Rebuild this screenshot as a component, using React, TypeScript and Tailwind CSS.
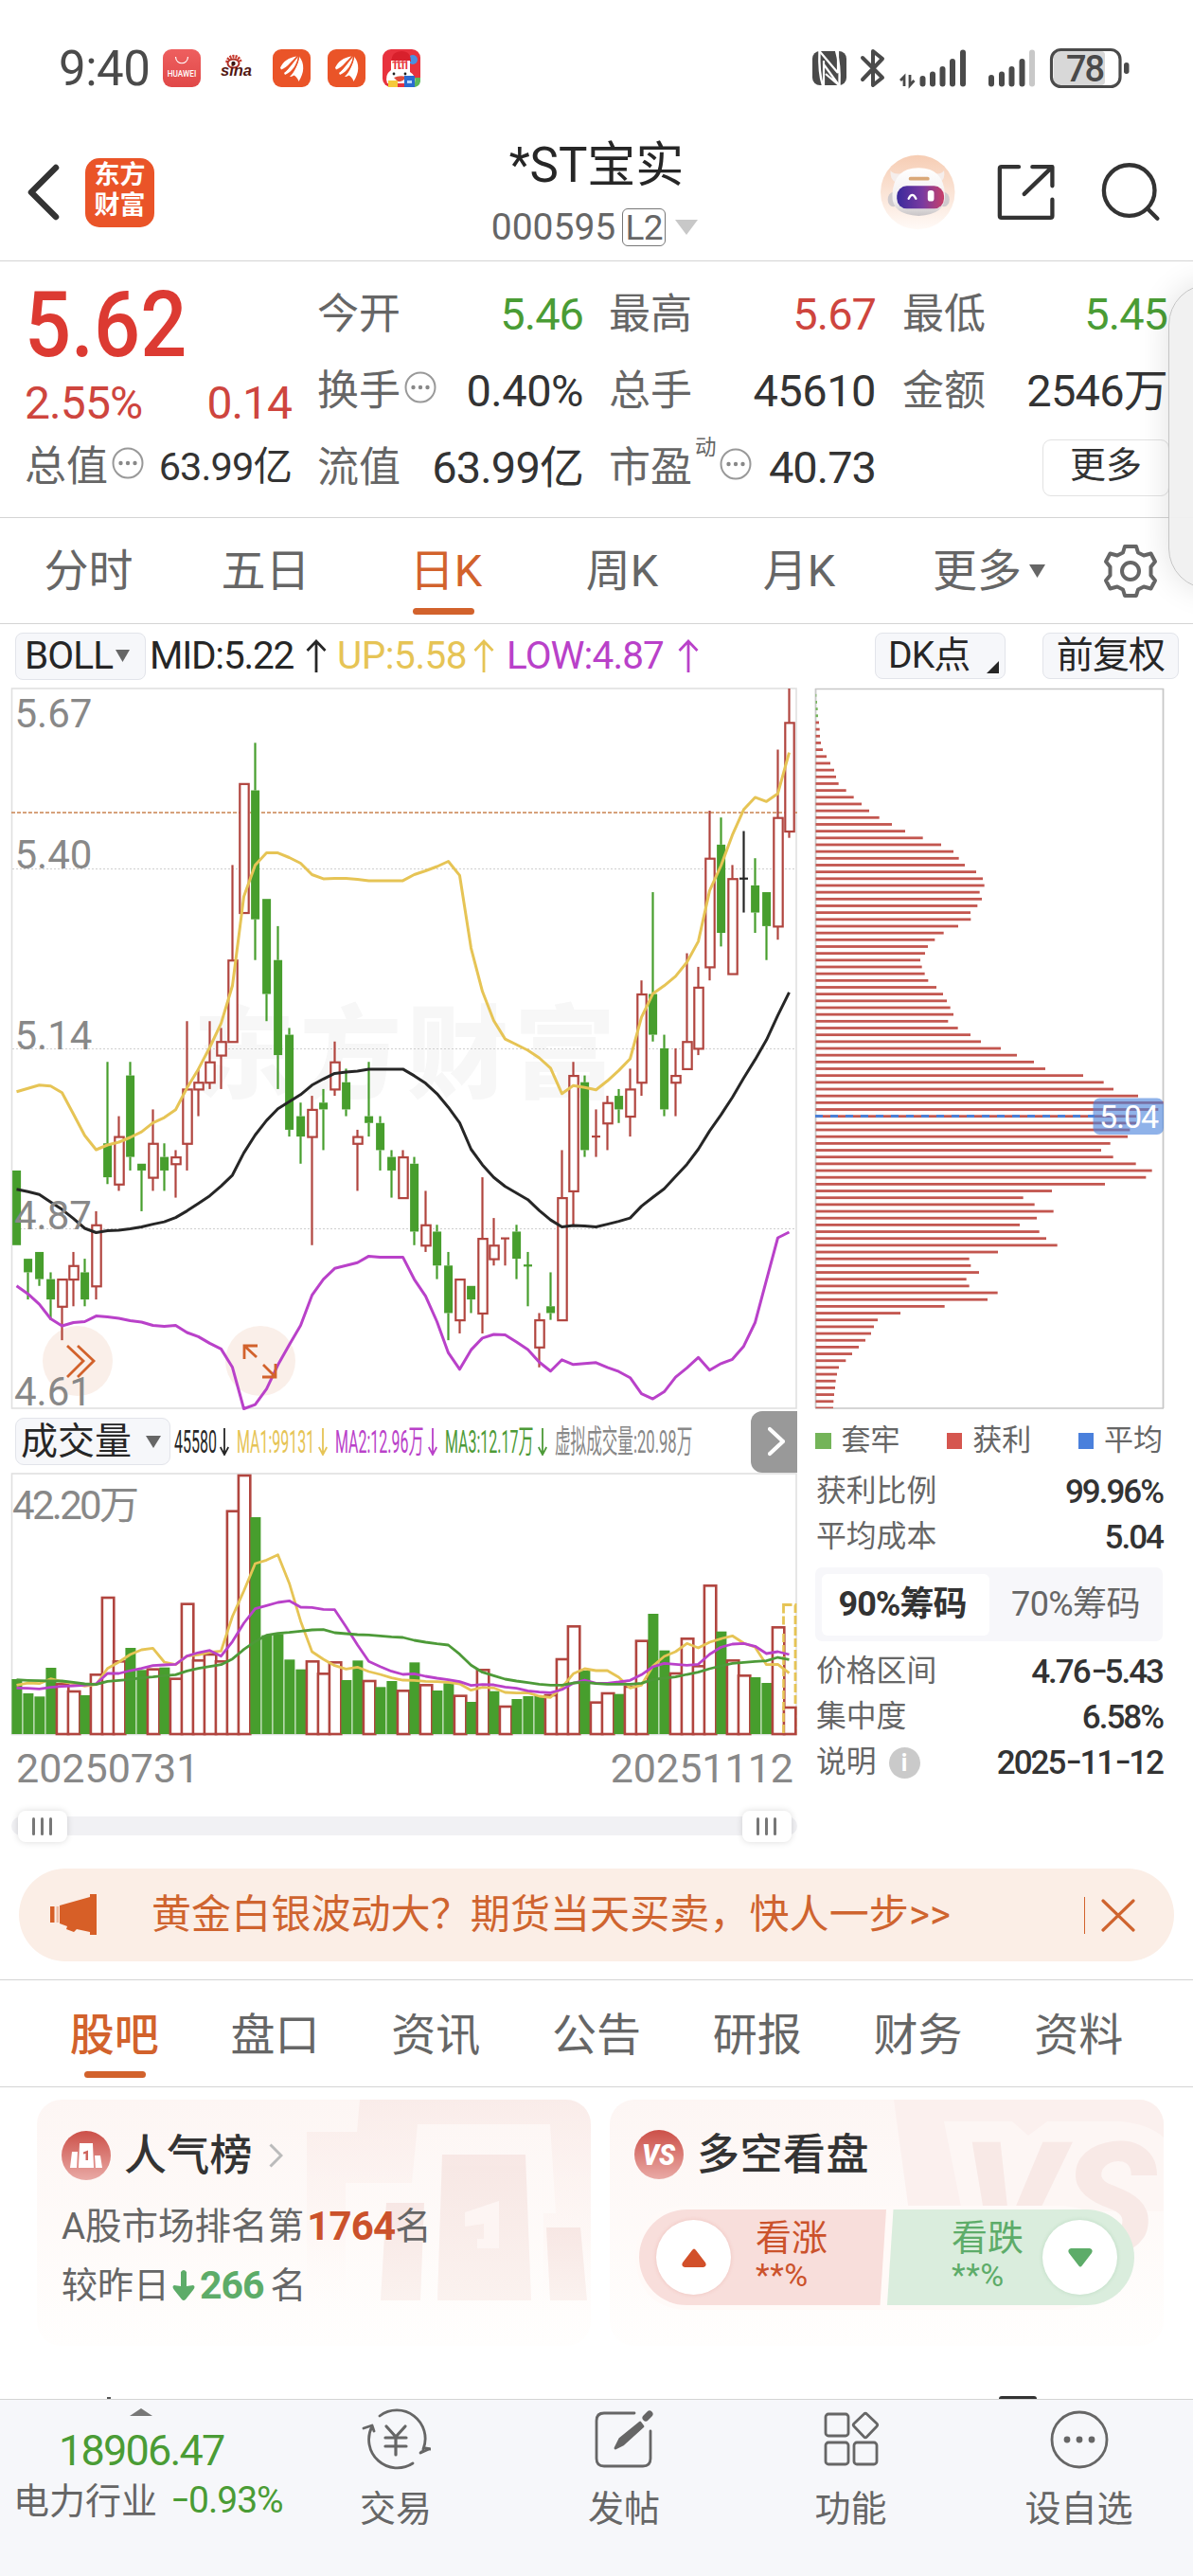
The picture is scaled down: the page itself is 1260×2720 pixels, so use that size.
import React from "react";

type Tone = "r" | "g" | "k";

/* Candles: tone, high, body top, body bottom, low — in cents below 5.67 */
const CANDLES: [Tone, number, number, number, number][] = [
  ["g", 71, 71, 82, 82], ["g", 84, 84, 86, 90], ["g", 83, 83, 87, 88], ["g", 86, 87, 90, 93],
  ["r", 87, 87, 91, 96], ["r", 83, 85, 87, 91], ["g", 84, 86, 90, 91], ["r", 77, 79, 88, 90],
  ["g", 55, 67, 72, 73], ["r", 63, 66, 73, 74], ["g", 55, 57, 69, 71], ["g", 70, 70, 71, 77],
  ["r", 62, 67, 72, 74], ["g", 67, 69, 71, 74], ["r", 68, 69, 70, 75], ["r", 49, 59, 67, 71],
  ["r", 56, 58, 59, 63], ["r", 49, 55, 58, 59], ["r", 50, 52, 54, 59], ["r", 26, 40, 52, 52],
  ["r", 14, 14, 33, 33], ["g", 8, 15, 34, 40], ["g", 31, 31, 45, 49], ["g", 35, 40, 54, 59],
  ["g", 50, 51, 65, 66], ["g", 61, 63, 66, 70], ["r", 60, 62, 66, 82], ["g", 59, 61, 62, 68],
  ["r", 52, 55, 59, 60], ["g", 56, 58, 62, 63], ["r", 65, 66, 67, 74], ["g", 55, 63, 64, 66],
  ["g", 63, 64, 68, 71], ["g", 68, 69, 71, 75], ["r", 68, 69, 75, 75], ["g", 69, 70, 80, 82],
  ["r", 74, 79, 82, 83], ["g", 79, 80, 85, 87], ["g", 83, 85, 92, 96], ["r", 87, 87, 93, 95],
  ["g", 88, 88, 90, 92], ["r", 72, 81, 92, 95], ["r", 78, 82, 84, 85], ["r", 81, 81, 81, 85],
  ["g", 79, 80, 84, 87], ["g", 83, 85, 85, 91], ["r", 92, 93, 97, 100], ["g", 86, 91, 92, 93],
  ["r", 68, 75, 93, 93], ["r", 55, 57, 74, 79], ["g", 57, 58, 68, 69], ["r", 62, 66, 66, 69],
  ["r", 60, 61, 64, 68], ["g", 59, 60, 62, 64], ["r", 56, 59, 63, 66], ["r", 43, 45, 58, 60],
  ["g", 30, 45, 51, 52], ["g", 51, 53, 62, 63], ["r", 53, 57, 58, 63], ["r", 39, 52, 56, 56],
  ["r", 41, 44, 53, 54], ["r", 18, 25, 41, 43], ["g", 19, 23, 36, 38], ["r", 26, 28, 42, 42],
  ["k", 21, 28, 28, 33], ["g", 25, 29, 33, 36], ["g", 30, 30, 35, 40], ["r", 9, 19, 35, 37],
  ["r", 0, 5, 21, 22],
];

/* Bollinger series, in chart units (2.01 units per pixel) */
const UP = [870, 863, 856, 858, 872, 917, 963, 993, 983, 977, 967, 955, 936, 925, 908, 862, 822, 776, 725, 645, 456, 389, 363, 363, 373, 385, 409, 418, 417, 417, 419, 422, 422, 422, 422, 409, 401, 392, 381, 411, 565, 657, 719, 758, 770, 782, 798, 820, 874, 857, 861, 866, 847, 825, 800, 712, 662, 645, 625, 595, 551, 443, 390, 325, 271, 245, 254, 237, 150];
const MID = [1077, 1082, 1088, 1104, 1120, 1139, 1160, 1169, 1165, 1164, 1161, 1157, 1151, 1146, 1137, 1123, 1107, 1091, 1070, 1047, 1000, 962, 931, 906, 891, 876, 856, 843, 831, 828, 826, 822, 822, 822, 822, 836, 852, 874, 903, 936, 992, 1025, 1052, 1071, 1085, 1099, 1122, 1142, 1157, 1154, 1155, 1157, 1151, 1145, 1138, 1113, 1094, 1076, 1050, 1024, 992, 953, 919, 882, 841, 802, 760, 708, 659];
const LOW = [1282, 1299, 1321, 1352, 1367, 1360, 1358, 1346, 1348, 1351, 1356, 1359, 1366, 1368, 1366, 1381, 1390, 1404, 1416, 1455, 1543, 1534, 1501, 1450, 1407, 1366, 1302, 1268, 1245, 1239, 1233, 1219, 1221, 1221, 1221, 1268, 1304, 1358, 1424, 1459, 1418, 1393, 1385, 1386, 1401, 1417, 1444, 1463, 1439, 1449, 1447, 1445, 1455, 1464, 1477, 1511, 1522, 1507, 1476, 1456, 1434, 1461, 1447, 1438, 1410, 1360, 1270, 1180, 1168];

/* Volume bars and moving averages (3 units per pixel) */
const VOL: [Tone, number][] = [
  ["g", 849], ["g", 894], ["g", 904], ["g", 813], ["r", 862], ["r", 885], ["g", 900], ["r", 832], ["r", 588], ["r", 790],
  ["g", 750], ["g", 820], ["r", 815], ["g", 812], ["r", 845], ["r", 608], ["r", 787], ["r", 768], ["r", 790], ["r", 314],
  ["r", 201], ["g", 336], ["g", 710], ["g", 706], ["g", 787], ["g", 818], ["r", 790], ["r", 829], ["r", 793], ["g", 852],
  ["g", 790], ["r", 852], ["g", 874], ["g", 855], ["r", 883], ["g", 796], ["r", 865], ["g", 885], ["g", 862], ["r", 899],
  ["g", 921], ["r", 817], ["g", 887], ["r", 933], ["g", 912], ["g", 903], ["g", 900], ["r", 897], ["r", 783], ["r", 679],
  ["g", 822], ["r", 920], ["r", 891], ["g", 896], ["r", 870], ["r", 725], ["g", 642], ["g", 758], ["r", 828], ["r", 718],
  ["r", 805], ["r", 550], ["g", 698], ["r", 787], ["r", 835], ["g", 843], ["g", 861], ["r", 682], ["r", 936],
];
const MA1 = [868, 861, 863, 848, 857, 863, 871, 866, 815, 795, 771, 756, 751, 795, 803, 776, 772, 764, 760, 650, 570, 483, 472, 455, 545, 665, 762, 786, 806, 817, 811, 825, 834, 845, 852, 853, 856, 857, 859, 864, 884, 875, 877, 891, 893, 892, 903, 907, 875, 832, 816, 822, 822, 843, 877, 868, 808, 777, 762, 736, 750, 732, 721, 712, 735, 748, 803, 802, 830];
const MA2 = [877, 878, 880, 875, 872, 870, 868, 864, 831, 831, 822, 815, 806, 804, 802, 776, 765, 758, 776, 730, 672, 626, 616, 606, 601, 621, 622, 628, 629, 683, 740, 793, 809, 824, 834, 832, 840, 846, 851, 857, 869, 866, 867, 874, 878, 886, 890, 892, 882, 862, 852, 862, 862, 858, 853, 835, 810, 799, 802, 805, 802, 770, 748, 738, 736, 745, 768, 762, 771];
const MA3 = [851, 853, 854, 855, 855, 859, 864, 866, 856, 853, 850, 845, 842, 838, 835, 823, 815, 809, 803, 785, 755, 730, 710, 704, 701, 697, 693, 692, 702, 705, 708, 709, 712, 715, 717, 726, 732, 737, 741, 770, 805, 827, 838, 849, 855, 860, 865, 868, 868, 861, 859, 863, 865, 865, 865, 862, 850, 846, 842, 834, 827, 816, 807, 799, 796, 793, 791, 780, 787];

/* Chip distribution: bar end for each cent below 5.67 (3 units per pixel) */
const CHIPS = [37, 39, 41, 42, 45, 47, 48, 51, 57, 69, 81, 93, 99, 107, 131, 155, 180, 204, 236, 276, 318, 374, 432, 471, 488, 507, 543, 564, 569, 554, 561, 547, 525, 526, 486, 440, 412, 390, 381, 366, 371, 380, 391, 417, 438, 450, 461, 471, 454, 485, 525, 558, 621, 672, 726, 762, 882, 947, 978, 1056, 1136, 1120, 1050, 1050, 1030, 1023, 968, 939, 977, 1049, 1100, 1081, 951, 783, 692, 728, 788, 735, 681, 743, 765, 800, 612, 521, 526, 552, 512, 521, 611, 579, 443, 303, 231, 219, 210, 192, 171, 150, 130, 108, 102, 98, 96, 93, 91, 90];

const RED = "#b1453f";
const GREEN = "#479e2d";
const YELLOW = "#e6c455";
const PURPLE = "#b941c9";
const tone = (t: Tone) => (t === "r" ? RED : t === "g" ? GREEN : "#262626");
const cx = (i: number) => 17.5 + 12 * i;
const py = (n: number) => 727 + n * 7.168;
const line = (a: number[], y: (v: number) => number) => a.map((v, i) => `${cx(i)},${y(v).toFixed(1)}`).join(" ");

function KChart() {
  const b = (v: number) => 720 + v / 2.0103;
  return (
    <svg className="block overflow-visible" width="848" height="766" viewBox="0 724 848 766" fontFamily="Roboto, 'Noto Sans CJK SC', sans-serif">
      <text x="204" y="1151" fontSize="107" fontWeight="900" letterSpacing="6" fill="#f7f7f7">东方财富</text>
      <rect x="12.5" y="727" width="828.5" height="760" fill="none" stroke="#e0e0e0" strokeWidth="1.6" />
      {[917.5, 1107.5, 1297.5].map((y) => (
        <line key={y} x1="13" x2="841" y1={y} y2={y} stroke="#cfcfcf" strokeDasharray="2 2" />
      ))}
      <line x1="12" x2="842" y1="858" y2="858" stroke="#c98350" strokeWidth="1.4" strokeDasharray="4 2" />
      {CANDLES.map(([t, h, a, z, l], i) => {
        const x = cx(i);
        return (
          <g key={i} stroke={tone(t)} strokeWidth="2.2">
            {h < a && <line x1={x} x2={x} y1={py(h)} y2={py(a)} />}
            {l > z && <line x1={x} x2={x} y1={py(z)} y2={py(l)} />}
            {a === z ? (
              <line x1={x - 4.5} x2={x + 4.5} y1={py(a)} y2={py(a)} />
            ) : t === "r" ? (
              <rect x={x - 4.2} y={py(a) + 0.5} width="9.4" height={py(z) - py(a)} fill="#fff" />
            ) : (
              <rect x={x - 4.4} y={py(a)} width="9" height={py(z) - py(a)} fill={tone(t)} stroke="none" />
            )}
          </g>
        );
      })}
      <circle cx="82" cy="1437" r="37" fill="#d2622c" fillOpacity=".1" />
      <circle cx="275" cy="1437" r="37" fill="#d2622c" fillOpacity=".1" />
      <g fill="none" strokeWidth="3" strokeLinejoin="round">
        <polyline points={line(UP, b)} stroke={YELLOW} />
        <polyline points={line(MID, b)} stroke="#262626" />
        <polyline points={line(LOW, b)} stroke={PURPLE} />
      </g>
      <g fill="#888" fontSize="42">
        <text x="15.5" y="768">5.67</text>
        <text x="15.5" y="917">5.40</text>
        <text x="15.5" y="1108">5.14</text>
        <text x="15" y="1298">4.87</text>
        <text x="15" y="1484">4.61</text>
      </g>
      <g fill="none" stroke="#d2622c" strokeWidth="2.8">
        <path d="M71 1421 88 1437 71 1454M82 1421 99 1437 82 1454" />
        <path d="M272 1421H258V1435M258 1421 271 1433M277 1454H291V1440M291 1454 278 1441" />
      </g>
    </svg>
  );
}

function VolumeChart() {
  const v = (n: number) => 1490 + n / 3;
  return (
    <svg className="block" width="848" height="280" viewBox="0 1554 848 280" fontFamily="Roboto, 'Noto Sans CJK SC', sans-serif">
      <rect x="12.5" y="1556" width="828.5" height="275.5" fill="none" stroke="#e0e0e0" strokeWidth="1.6" />
      <text x="13" y="1603.500" fontSize="42" fill="#888" textLength="134">42.20万</text>
      <rect x="827.5" y="1694.5" width="12.5" height="136" fill="none" stroke={YELLOW} strokeWidth="2.8" strokeDasharray="9 3" />
      {VOL.map(([t, n], i) =>
        t === "r" ? (
          <rect key={i} x={cx(i) - 5.6} y={v(n) + 1} width="12.4" height={1830 - v(n)} fill="#fff" stroke={RED} strokeWidth="2.6" />
        ) : (
          <rect key={i} x={cx(i) - 5.1} y={v(n)} width="11" height={1831 - v(n)} fill={GREEN} />
        ),
      )}
      <path d="M827.500 1725V1830" stroke={YELLOW} strokeWidth="2.600" strokeDasharray="9 3" />
      <g fill="none" strokeWidth="2.800" strokeLinejoin="round">
        <polyline points={line(MA1, v)} stroke={YELLOW} />
        <polyline points={line(MA2, v)} stroke={PURPLE} />
        <polyline points={line(MA3, v)} stroke="#4d9a38" />
      </g>
    </svg>
  );
}

function ChipChart() {
  return (
    <svg className="block" width="400" height="766" viewBox="848 724 400 766" fontFamily="Roboto, sans-serif">
      <g stroke="#c8c8c8" fill="none">
        <path d="M861 727.5H1229M861 1487H1229" strokeWidth="1.3" />
        <path d="M861.5 727V1487M1228.5 727V1487" strokeWidth="1.8" />
      </g>
      {CHIPS.map((e, k) => (
        <rect key={k} x="861.5" y={py(k + 1) - 1.3} width={850 + e / 3 - 861.5} height={k === 105 ? 1.6 : 2.8} fill={k < 4 ? "#74b459" : "#c3564f"} />
      ))}
      <line x1="861" x2="1156" y1={py(63)} y2={py(63)} stroke="#4a80d6" strokeWidth="3" strokeDasharray="8 8" />
      <rect x="1154.500" y="1159.500" width="74.500" height="38.500" rx="7" fill="#4b82dc" fillOpacity=".62" />
      <text x="1161" y="1191" fontSize="34" fill="#fff" textLength="63">5.04</text>
    </svg>
  );
}

const Dots = ({ className = "" }: { className?: string }) => (
  <svg className={className} width="34" height="34" viewBox="0 0 34 34">
    <circle cx="17" cy="17" r="15.500" fill="none" stroke="#999" strokeWidth="2" />
    <circle cx="9.500" cy="17" r="2.200" fill="#888" /><circle cx="17" cy="17" r="2.200" fill="#888" /><circle cx="24.500" cy="17" r="2.200" fill="#888" />
  </svg>
);

const Caret = ({ w, h, c = "#666", className = "" }: { w: number; h: number; c?: string; className?: string }) => (
  <svg className={className} width={w} height={h} viewBox="0 0 10 10" preserveAspectRatio="none"><path d="M0 0H10L5 10Z" fill={c} /></svg>
);

const UpArrow = ({ c }: { c: string }) => (
  <svg width="22" height="36" viewBox="0 0 22 36" fill="none" stroke={c} strokeWidth="2.800"><path d="M11 35V2M1.500 12 11 2 20.500 12" /></svg>
);
const DownArrow = ({ c }: { c: string }) => (
  <svg className="shrink-0" width="10" height="29" viewBox="0 0 10 29" fill="none" stroke={c} strokeWidth="1.800"><path d="M5 0V28M.8 20 5 28 9.200 20" /></svg>
);

function Emblem() {
  return (
    <svg width="40" height="40" viewBox="0 0 40 40">
      <rect width="40" height="40" rx="9" fill="#ea5428" />
      <path d="M8 19.500C11 13 17 8.500 25.500 7.500C20 12 16.500 18.500 9 21.500Z" fill="#fff" />
      <path d="M12 25C18 20.500 21.500 12 27 7.500C25.500 16 21 23.500 13 27Z" fill="#fff" />
      <path d="M18 29C24 23 27 15 28 7.500C34 15 33.500 25 27.500 34C26.500 31 24.500 28.500 22.500 27.500C20.500 28.500 19.500 29 18 29Z" fill="#fff" />
      <path d="M11.500 24C18 20 22 12 26.500 7.500M17 28.500C23 22 26.500 15 27.800 8" stroke="#ea5428" strokeWidth="1.300" fill="none" />
    </svg>
  );
}

function StatusBar() {
  return (
    <div className="flex h-[144px] shrink-0 items-center pl-[62px] pr-[64px] text-[#4a4a4a]">
      <div className="w-[110px] text-[51px] leading-none tracking-[-0.500px]">9:40</div>
      <div className="flex w-[40px] h-[40px] flex-col items-center rounded-[9px] bg-gradient-to-b from-[#ee5f5f] to-[#e04848]">
        <svg width="16" height="10" viewBox="0 0 16 10" className="mt-[8px]" fill="none" stroke="#fff" strokeWidth="1.200"><path d="M1.500 0C2 9 14 9 14.500 0" /></svg>
        <span className="mt-[4px] text-[8.200px] font-medium leading-none text-white">HUAWEI</span>
      </div>
      <svg className="ml-[20px]" width="38" height="34" viewBox="0 0 38 34">
        <path d="M8 11C8 3 21 2 22 11" fill="none" stroke="#c8372b" strokeWidth="3.500" strokeDasharray="2 1" />
        <ellipse cx="14.500" cy="12" rx="6" ry="4.500" fill="#fff" stroke="#b03025" strokeWidth="2" />
        <circle cx="14.500" cy="12" r="2.200" fill="#3a1512" />
        <text x="1" y="25" fontFamily="Liberation Sans, sans-serif" fontSize="16" fontWeight="700" fontStyle="italic" fill="#521712" textLength="33" lengthAdjust="spacingAndGlyphs">sina</text>
      </svg>
      <div className="ml-[18px]"><Emblem /></div>
      <div className="ml-[18px]"><Emblem /></div>
      <svg className="ml-[18px]" width="40" height="40" viewBox="0 0 40 40">
        <rect width="40" height="40" rx="9" fill="#e8323e" />
        <circle cx="32" cy="11" r="5" fill="#4a8fe0" /><path d="M30 30H40V34Q39 40 32 40H28Z" fill="#5cb85a" />
        <path d="M9 13Q10 2 20 2Q30 2 30 13Z" fill="#d8202c" />
        <path d="M9 12H29V24Q36 28 34 36H5Q2 27 9 22Z" fill="#fff" />
        <text x="9.500" y="21" fontFamily="Roboto, sans-serif" fontSize="12" fontWeight="700" fill="#e8323e" textLength="19">11.11</text>
        <circle cx="12" cy="26" r="1.400" fill="#222" /><circle cx="24" cy="26" r="1.400" fill="#222" />
        <path d="M12 30Q18 27 25 29Q22 35 16 34Z" fill="#e04a3a" />
        <rect x="6" y="33" width="10" height="7" fill="#f5c93a" /><rect x="23" y="28" width="11" height="12" fill="#2b6bd0" /><rect x="26" y="33" width="5" height="3" fill="#bcd8ff" />
      </svg>
      <svg className="ml-auto" width="340" height="44" viewBox="856 50 340 44">
        <rect x="858" y="54" width="36" height="36" rx="8" fill="#4a4a4a" />
        <path d="M869 90.500C865 78 865 66 865.500 54M883 53.500C887 66 887 78 886.500 90" fill="none" stroke="#fff" strokeWidth="2.400" />
        <path d="M865.500 54 885 77M870 64V90M870 68 886 90M885 77V54M872 78 886 90" fill="none" stroke="#fff" strokeWidth="2.200" />
        <path d="M911 61 932 82 922 90V54L932 62 911 84" fill="none" stroke="#4a4a4a" strokeWidth="4" strokeLinejoin="round" strokeLinecap="round" />
        <path d="M955 91V81L951 85M961 79V90L965.500 85" fill="none" stroke="#4a4a4a" strokeWidth="2.800" />
        <g stroke="#4a4a4a" strokeWidth="6" strokeLinecap="round">
          <path d="M974.500 83V88.500M985 78.500V88.500M995.500 73V88.500M1006 65V88.500M1017 55.500V88.500" />
          <path d="M1047 82V88.500M1058 78.500V88.500M1068.500 73V88.500M1079.500 65V88.500" />
          <path d="M1090 55.500V88.500" stroke="#c8c8c8" />
        </g>
        <rect x="1113" y="54" width="54" height="36" rx="4" fill="#d8d8d8" />
        <rect x="1110.500" y="52.500" width="72.500" height="39" rx="10" fill="none" stroke="#4a4a4a" strokeWidth="3.200" />
        <rect x="1187" y="66" width="5.500" height="12" rx="2.700" fill="#4a4a4a" />
        <text x="1126" y="86" fontFamily="Roboto, sans-serif" fontSize="38" fontWeight="500" fill="#4a4a4a" textLength="41">78</text>
      </svg>
    </div>
  );
}

function Header() {
  return (
    <div className="flex h-[131px] shrink-0 items-start">
      <div className="flex h-[118px] w-[330px] items-center pl-[28px]">
        <svg width="36" height="60" viewBox="0 0 36 60" fill="none" stroke="#333" strokeWidth="6.500" strokeLinejoin="round" strokeLinecap="round"><path d="M31 4 5 30 31 56" /></svg>
        <div className="ml-[26px] grid h-[73px] w-[73px] place-content-center rounded-[15px] bg-[#ea5428] pb-[4px] text-center text-[27px] font-bold leading-[32px] text-white">
          <span>东方</span><span>财富</span>
        </div>
      </div>
      <div className="flex flex-1 flex-col items-center">
        <div className="h-[63px] text-[51px] leading-[62px] text-[#262626]">*ST宝实</div>
        <div className="flex h-[66px] items-center pr-[4px] text-[39px] leading-none text-[#666]">
          <span>000595</span>
          <span className="ml-[7px] grid h-[40px] w-[46px] place-content-center rounded-[6px] border-[1.500px] border-[#777] text-[37px] tracking-[-0.500px]">L2</span>
          <Caret w={24} h={16} c="#c8c8c8" className="ml-[10px]" />
        </div>
      </div>
      <div className="flex h-[118px] w-[330px] items-center justify-end pr-[32px]">
        <svg width="82" height="82" viewBox="0 0 82 82">
          <defs>
            <linearGradient id="halo" x1="0" y1="0" x2="0" y2="1"><stop offset="0" stopColor="#f6cdb4" /><stop offset="1" stopColor="#fffaf7" /></linearGradient>
            <linearGradient id="visor"><stop offset="0" stopColor="#3a2a9c" /><stop offset=".55" stopColor="#7a3aa0" /><stop offset="1" stopColor="#c84068" /></linearGradient>
            <linearGradient id="head" x1="0" y1="0" x2="0" y2="1"><stop offset="0" stopColor="#fff" /><stop offset=".7" stopColor="#f1eeee" /><stop offset="1" stopColor="#c9c5c7" /></linearGradient>
          </defs>
          <circle cx="41" cy="41" r="41" fill="url(#halo)" />
          <path d="M11 17Q10 27 17 30L24 20Q14 22 11 17ZM70 17Q72 27 65 30L58 20Q67 22 70 17Z" fill="#f5eeec" />
          <ellipse cx="14" cy="49" rx="6" ry="8" fill="#cfcacd" /><ellipse cx="70" cy="49" rx="6" ry="8" fill="#cfcacd" />
          <path d="M13 44Q14 14 42 14Q70 14 71 44Q72 66 42 67Q12 66 13 44Z" fill="url(#head)" />
          <rect x="31" y="24" width="23" height="4" rx="2" fill="#d9a878" />
          <rect x="18" y="34" width="52" height="25" rx="11" fill="url(#visor)" />
          <path d="M31 48Q35 40 39 48" fill="none" stroke="#fff" strokeWidth="2.500" strokeLinecap="round" /><rect x="52" y="39" width="7" height="12" rx="3" fill="#fff" />
        </svg>
        <svg className="ml-[44px]" width="64" height="64" viewBox="0 0 64 64" fill="none" stroke="#333" strokeWidth="4.500" strokeLinecap="round" strokeLinejoin="round">
          <path d="M24 4H5Q3 4 3 6V58Q3 60 5 60H59Q61 60 61 58V40" /><path d="M39 4H61V25M60 5 30 34" />
        </svg>
        <svg className="ml-[49px] mr-[2px]" width="66" height="66" viewBox="0 0 66 66" fill="none" stroke="#333" strokeWidth="4.500" strokeLinecap="round"><circle cx="31" cy="31" r="28" /><path d="M51 51 62 62" /></svg>
      </div>
    </div>
  );
}

function Cell({ label, value, color = "text-[#333]", extra }: { label: string; value: string; color?: string; extra?: React.ReactNode }) {
  return (
    <div className="flex h-[81px] items-center justify-between text-[47px] leading-none tracking-[-1px]">
      <span className="flex items-center text-[44px] tracking-normal text-[#666]">{label}{extra}</span>
      <span className={color}>{value}</span>
    </div>
  );
}

function Quote() {
  return (
    <div className="flex h-[271px] shrink-0 border-t-[1.500px] border-[#d4d4d4] pl-[26px] pt-[15px]">
      <div className="w-[282px]">
        <div className="h-[97px] origin-left scale-x-[0.9] text-[96px] font-medium leading-[105px] text-[#dc3a32]">5.62</div>
        <div className="flex h-[73px] items-center justify-between pt-[2px] text-[48px] leading-none text-[#ce453e]"><span className="tracking-[-0.900px]">2.55%</span><span className="tracking-[-1px]">0.14</span></div>
        <div className="flex h-[64px] items-center whitespace-nowrap text-[44px] leading-none text-[#666]">
          总值<Dots className="mb-[8px] ml-[4px] shrink-0" /><span className="ml-auto text-[41.500px] tracking-[-0.900px] text-[#333]">63.99亿</span>
        </div>
      </div>
      <div className="ml-[27px] w-[281px]">
        <Cell label="今开" value="5.46" color="text-[#4a9c35]" />
        <Cell label="换手" value="0.40%" color="text-[#333] tracking-[-0.500px]" extra={<Dots className="mb-[8px] ml-[4px]" />} />
        <Cell label="流值" value="63.99亿" color="text-[#333] tracking-[-0.900px]" />
      </div>
      <div className="ml-[27px] w-[282px]">
        <Cell label="最高" value="5.67" color="text-[#ce453e]" />
        <Cell label="总手" value="45610" color="text-[#333] tracking-[-0.500px]" />
        <Cell label="市盈" value="40.73" extra={<><span className="mb-[42px] ml-[3px] text-[22.500px]">动</span><Dots className="mb-[8px] ml-[3px]" /></>} />
      </div>
      <div className="ml-[28px] w-[280px]">
        <Cell label="最低" value="5.45" color="text-[#4a9c35]" />
        <Cell label="金额" value="2546万" color="text-[#333] tracking-[-0.800px]" />
        <div className="flex h-[81px] items-center justify-end">
          <span className="mr-[-2px] grid h-[60px] w-[134px] place-content-center rounded-[9px] border-[1.500px] border-[#e2e2e2] pb-[6px] text-[38px] leading-none text-[#333]">更多</span>
        </div>
      </div>
    </div>
  );
}

function PeriodTabs() {
  return (
    <div className="grid h-[113px] shrink-0 grid-cols-[187px_187px_194px_178px_196px_211px_1fr] items-center border-y-[1.500px] border-[#d4d4d4] text-center text-[47px] leading-none text-[#666]">
      <span>分时</span><span>五日</span>
      <span className="relative text-[#d2622c]">日K<i className="absolute left-[62px] top-[63px] h-[7px] w-[65px] rounded-full bg-[#d2622c]" /></span>
      <span>周K</span><span>月K</span>
      <span className="flex items-center pl-[43px]">更多<Caret w={17} h={14} className="ml-[8px]" /></span>
      <svg className="ml-[11px]" width="60" height="62" viewBox="-30 -31 60 62" fill="none" stroke="#666" strokeWidth="4">
        <path strokeLinejoin="round" d="M-6-26H6L8-19.500 14-16.500 21.500-18.500 26-10 21.500-4.500V4.500L26 10 21.500 18.500 14 16.500 8 19.500 6 26H-6L-8 19.500-14 16.500-21.500 18.500-26 10-21.500 4.500V-4.500L-26-10-21.500-18.500-14-16.500-8-19.500Z" /><circle r="9" />
      </svg>
    </div>
  );
}

function IndicatorRow() {
  return (
    <div className="flex h-[65px] shrink-0 items-center pl-[16px] pr-[15px] pt-[2px] text-[40.500px] leading-none tracking-[-0.900px]">
      <span className="flex h-[50px] w-[138px] shrink-0 items-center rounded-[8px] border-[1.500px] border-[#e2e4ea] bg-[#f6f7fa] pl-[9px] text-[#262626]">BOLL<Caret w={15} h={13} className="ml-[3px]" /></span>
      <span className="ml-[4px] flex w-[198px] items-center text-[#262626]"><span className="w-[165px] tracking-[-1.200px]">MID:5.22</span><UpArrow c="#262626" /></span>
      <span className="flex w-[179px] items-center text-[#e6c455]"><span className="w-[144px] tracking-[-0.500px]">UP:5.58</span><UpArrow c="#e6c455" /></span>
      <span className="flex items-center text-[#b941c9]"><span className="w-[181px]">LOW:4.87</span><UpArrow c="#b941c9" /></span>
      <span className="ml-auto flex h-[49px] w-[138px] items-center rounded-[8px] border-[1.500px] border-[#e2e4ea] bg-[#f6f7fa] pl-[13px] text-[39px] text-[#262626]">DK点<svg className="ml-auto mr-[6px] mt-[24px]" width="13" height="13" viewBox="0 0 13 13"><path d="M13 0V13H0Z" fill="#262626" /></svg></span>
      <span className="ml-[39px] grid h-[49px] w-[144px] place-content-center rounded-[8px] border-[1.500px] border-[#e2e4ea] bg-[#f6f7fa] text-[39px] text-[#262626]">前复权</span>
    </div>
  );
}

function VolumeHeader() {
  return (
    <div className="flex h-[64px] items-center pl-[16px] text-[34px] leading-none">
      <span className="flex h-[50px] w-[164px] shrink-0 items-center rounded-[9px] border-[1.500px] border-[#e2e4ea] bg-[#f6f7fa] pl-[5px] text-[39px] text-[#262626]">成交量<Caret w={16} h={13} className="ml-auto mr-[9px]" /></span>
      <span className="ml-[4px] flex w-[66px] items-center text-[#262626]"><span className="w-[48px]"><span className="inline-block origin-left scale-x-[0.47] whitespace-nowrap">45580</span></span><DownArrow c="#262626" /></span>
      <span className="flex w-[104px] items-center text-[#e6c455]"><span className="w-[86px]"><span className="inline-block origin-left scale-x-[0.47] whitespace-nowrap">MA1:99131</span></span><DownArrow c="#e6c455" /></span>
      <span className="flex w-[116px] items-center text-[#b941c9]"><span className="w-[98px]"><span className="inline-block origin-left scale-x-[0.47] whitespace-nowrap">MA2:12.96万</span></span><DownArrow c="#b941c9" /></span>
      <span className="flex w-[116px] items-center text-[#4d9a38]"><span className="w-[98px]"><span className="inline-block origin-left scale-x-[0.47] whitespace-nowrap">MA3:12.17万</span></span><DownArrow c="#4d9a38" /></span>
      <span className="w-[150px] text-[#888]"><span className="inline-block origin-left scale-x-[0.488] whitespace-nowrap">虚拟成交量:20.98万</span></span>
      <span className="ml-auto mr-[6px] grid h-[65px] w-[49px] shrink-0 place-content-center rounded-l-[12px] bg-[#999]"><svg className="ml-[4px]" width="18" height="32" viewBox="0 0 18 32" fill="none" stroke="#fff" strokeWidth="4.200" strokeLinecap="round"><path d="M2 3 16 16 2 29" /></svg></span>
    </div>
  );
}

const Row = ({ k, v, info }: { k: string; v: string; info?: boolean }) => (
  <div className="flex h-[48px] items-center justify-between leading-none">
    <span className="flex items-center pl-px text-[31.800px] text-[#666]">{k}{info && <span className="ml-[13px] grid h-[33px] w-[33px] place-content-center rounded-full bg-[#cacaca] text-[25px] font-bold text-white">i</span>}</span>
    <span className="flex text-[35px] font-medium tracking-[-2px] text-[#333]">
      {v.split("–").map((p, i) => (
        <React.Fragment key={i}>{i > 0 && <span className="ml-[2px] inline-block w-[14px]"><span className="inline-block origin-left scale-x-[0.72]">–</span></span>}<span>{p}</span></React.Fragment>
      ))}
    </span>
  </div>
);

const Legend = ({ c, t }: { c: string; t: string }) => (
  <span className="flex items-center text-[31px] leading-none text-[#666]"><i className={`mr-[11px] mt-[2px] h-[16.500px] w-[16.500px] ${c}`} />{t}</span>
);

function Handle() {
  return (
    <span className="flex h-[33px] w-[52px] items-center justify-center gap-[6px] rounded-[8px] bg-white shadow-[0_0_7px_rgba(0,0,0,0.15)]">
      <i className="h-[19px] w-[3px] rounded bg-[#777]" /><i className="h-[19px] w-[3px] rounded bg-[#777]" /><i className="h-[19px] w-[3px] rounded bg-[#777]" />
    </span>
  );
}

function Charts() {
  return (
    <div className="flex h-[1249px] shrink-0">
      <div className="w-[848px]">
        <KChart />
        <VolumeHeader />
        <VolumeChart />
        <div className="flex h-[66px] items-center justify-between pl-[17px] pr-[10px] text-[43px] leading-none text-[#888]"><span>20250731</span><span>20251112</span></div>
        <div className="ml-[12px] mt-[18px] flex h-[20px] w-[830px] items-center justify-between rounded-full bg-[#f1f1f4] px-[6.500px]"><Handle /><Handle /></div>
      </div>
      <div className="w-[412px]">
        <ChipChart />
        <div className="ml-[13px] mt-[6px] w-[367px]">
          <div className="flex h-[49px] items-center justify-between"><Legend c="bg-[#74b459]" t="套牢" /><Legend c="bg-[#d5564f]" t="获利" /><Legend c="bg-[#4a80dc]" t="平均" /></div>
          <div className="mt-[6px]"><Row k="获利比例" v="99.96%" /><Row k="平均成本" v="5.04" /></div>
          <div className="mb-[8px] mt-[8px] flex h-[78px] items-center rounded-[7px] bg-[#f7f7fa] p-[6.500px] text-[36px] leading-none">
            <span className="grid h-[65px] w-[177px] place-content-center rounded-[6px] bg-white pr-[6px] font-bold tracking-[-1px] text-[#333]">90%筹码</span>
            <span className="flex-1 pl-[6px] text-center tracking-[-0.600px] text-[#666]">70%筹码</span>
          </div>
          <Row k="价格区间" v="4.76–5.43" /><Row k="集中度" v="6.58%" /><Row k="说明" v="2025–11–12" info />
        </div>
      </div>
    </div>
  );
}

function Banner() {
  return (
    <div className="mx-[20px] flex h-[98px] shrink-0 items-center rounded-full bg-[#fbeee6] pl-[33px] text-[42px] leading-none text-[#cf642f]">
      <svg width="50" height="44" viewBox="0 0 50 44" fill="#d75f27"><path d="M0 13H4.500V30H0ZM10 12 42 3V0H49V43H42V40L28 37L25 40L17 37L18 34L10 31Z" /><path d="M6.500 13H9V30H6.500Z" opacity=".35" /></svg>
      <span className="ml-[57px] whitespace-nowrap tracking-[0.100px]">黄金白银波动大？期货当天买卖，快人一步&gt;&gt;</span>
      <i className="ml-auto h-[39px] w-[1.500px] bg-[#d2622c]" />
      <svg className="ml-[17px] mr-[41px]" width="36" height="35" viewBox="0 0 36 35" stroke="#cf642f" strokeWidth="3.200" strokeLinecap="round"><path d="M2 2 34 33M34 2 2 33" /></svg>
    </div>
  );
}

function InfoTabs() {
  return (
    <div className="mt-[19px] flex h-[114px] shrink-0 items-center border-y-[1.500px] border-[#d4d4d4] px-[36px] pt-[3px] text-[47px] leading-none text-[#666]">
      {["股吧", "盘口", "资讯", "公告", "研报", "财务", "资料"].map((t, i) => (
        <span key={t} className={i ? "flex-1 text-center" : "relative flex-1 text-center font-medium text-[#d2622c]"}>
          {t}
          {i === 0 && <i className="absolute left-[53px] top-[62px] h-[7px] w-[65px] rounded-full bg-[#d2622c]" />}
        </span>
      ))}
    </div>
  );
}

function Cards() {
  return (
    <div className="flex h-[329px] shrink-0 gap-[20px] pl-[39px] pt-[13px]">
      <div className="relative h-[260px] w-[585px] shrink-0 overflow-hidden rounded-[26px] bg-gradient-to-b from-[#fdf6f4] to-[#fffefd] pl-[26px]">
        <svg className="absolute inset-0" width="585" height="260" viewBox="0 0 585 260">
          <defs><linearGradient id="fade" x1="0" y1="0" x2="0" y2="1"><stop offset="0" stopColor="#f8e8e5" stopOpacity=".7" /><stop offset=".6" stopColor="#fdf3f0" stopOpacity=".4" /><stop offset="1" stopColor="#fff" stopOpacity="0" /></linearGradient>
            <linearGradient id="block" x1="0" y1="0" x2="0" y2="1"><stop offset="0" stopColor="#f7e6e3" /><stop offset="1" stopColor="#fbf1ee" /></linearGradient></defs>
          <path d="M341 0H585V240H535V120H548L542 26H402L396 88H326V230H285V34H338Z" fill="url(#fade)" />
          <g fill="url(#block)" opacity=".9"><path d="M428 58H516L522 212H423Z" /><path d="M369 109H409L405 212H363Z" /><path d="M538 135H574L581 212H542Z" /></g>
          <path d="M452 119 488 107V157H465V147H472V131L452 134Z" fill="#fdf5f3" />
        </svg>
        <div className="relative flex h-[118px] items-center text-[45px] font-medium leading-none text-[#333]">
          <svg width="52" height="52" viewBox="0 0 52 52"><defs><linearGradient id="rd" x1="0" y1="0" x2="0" y2="1"><stop offset="0" stopColor="#cc5048" /><stop offset="1" stopColor="#e9aaa6" /></linearGradient></defs><circle cx="26" cy="26" r="26" fill="url(#rd)" /><path d="M19 13H33L34 39H18ZM11 22H17L16 39H9ZM35 26H41L43 39H36Z" fill="#fff" /><path d="M23 22.500 28 20.500V31H25.500V24L23 24.500Z" fill="#cf655e" /></svg>
          <span className="ml-[14px] tracking-[0.300px]">人气榜</span>
          <svg className="ml-[17px]" width="15" height="26" viewBox="0 0 15 26" fill="none" stroke="#bbb" strokeWidth="3"><path d="M1.500 1.500 13 13 1.500 24.500" /></svg>
        </div>
        <div className="relative flex h-[32px] items-center text-[38.500px] leading-none text-[#666]">A股市场排名第<b className="ml-[3px] text-[42px] tracking-[-0.800px] text-[#cb522b]">1764</b>名</div>
        <div className="relative mt-[30px] flex h-[32px] items-center text-[38px] leading-none text-[#666]">较昨日
          <svg className="ml-[3px]" width="24" height="33" viewBox="0 0 24 33" fill="#5dac69"><path d="M9 2Q12-2 15 2V17L22 16Q25 17 22 21L14 31Q12 33 10 31L2 21Q-1 17 2 16L9 17Z" /></svg>
          <b className="ml-[5px] mr-[7px] text-[41px] tracking-[-1px] text-[#5dac69]">266</b>名
        </div>
      </div>
      <div className="relative h-[260px] w-[585px] shrink-0 overflow-hidden rounded-[26px] bg-gradient-to-b from-[#fdf6f4] to-[#fffefd] pl-[26px]">
        <svg className="absolute inset-0" width="585" height="260" viewBox="0 0 585 260">
          <path d="M300 0H585V118H316Z" fill="#fbf0ee" />
          <path d="M353 23H425L442 38L462 23H540Q570 26 585 40V118H372Z" fill="#fdf6f4" />
          <text x="372" y="162" fontFamily="Roboto, sans-serif" fontSize="164" fontWeight="900" fontStyle="italic" fill="#f8e9e6" textLength="205" lengthAdjust="spacingAndGlyphs">VS</text>
          <path d="M78 112H476Q533 115 535 166Q533 218 476 222H78Q30 218 27 166Q30 115 78 112Z" fill="#fffaf8" />
        </svg>
        <div className="relative flex h-[116px] items-center text-[45px] font-medium leading-none text-[#333]">
          <svg width="52" height="52" viewBox="0 0 52 52"><circle cx="26" cy="26" r="26" fill="url(#rd)" /><text x="8" y="37" fontFamily="Roboto, sans-serif" fontSize="31" fontWeight="900" fontStyle="italic" fill="#fff" textLength="35" lengthAdjust="spacingAndGlyphs">VS</text></svg>
          <span className="ml-[14px] tracking-[0.500px]">多空看盘</span>
        </div>
        <div className="relative ml-[5px] flex h-[101px] w-[523px] gap-px overflow-hidden rounded-full text-[38px] leading-none">
          <div className="flex w-[261px] shrink-0 items-center bg-[#f8dedb] pl-[18px] text-[#cb522b] [clip-path:polygon(0_0,100%_0,97.500%_100%,0_100%)]">
            <span className="grid h-[79px] w-[79px] place-content-center rounded-full bg-white shadow-[0_0_4px_rgba(200,80,60,0.18)]"><svg width="26" height="20" viewBox="0 0 26 20" fill="#d2502a"><path d="M11 2Q13-1 15 2L25 15Q27 19 23 20H3Q-1 19 1 15Z" /></svg></span>
            <span className="mb-[2px] ml-[26px] flex flex-col"><span className="h-[40px] leading-[40px]">看涨</span><span className="h-[40px] text-[34px] leading-[38px] tracking-[0.500px]">**%</span></span>
          </div>
          <div className="flex w-[261px] shrink-0 items-center justify-end bg-[#daeddd] pr-[18px] text-[#5dac69] [clip-path:polygon(2.500%_0,100%_0,100%_100%,0_100%)]">
            <span className="mb-[2px] mr-[20px] flex flex-col"><span className="h-[40px] leading-[40px]">看跌</span><span className="h-[40px] text-[34px] leading-[38px] tracking-[0.500px]">**%</span></span>
            <span className="grid h-[79px] w-[79px] place-content-center rounded-full bg-white shadow-[0_0_4px_rgba(60,140,80,0.18)]"><svg width="26" height="20" viewBox="0 0 26 20" fill="#5dac69"><path d="M11 18Q13 21 15 18L25 5Q27 1 23 0H3Q-1 1 1 5Z" /></svg></span>
          </div>
        </div>
      </div>
    </div>
  );
}

function Tool({ label, children, className = "" }: { label: string; children: React.ReactNode; className?: string }) {
  return (
    <div className={`flex flex-col items-center pt-[9px] text-[38px] leading-none text-[#666] ${className}`}>
      <svg width="74" height="66" viewBox="-37 -33 74 66" fill="none" stroke="#666" strokeWidth="2.800" strokeLinejoin="round" strokeLinecap="round">{children}</svg>
      <span className="mt-[21px]">{label}</span>
    </div>
  );
}

function BottomBar() {
  return (
    <div className="relative grid flex-1 grid-cols-[313px_208px_276px_203px_1fr] border-t-[1.500px] border-[#d4d4d4] bg-[#f6f7fa]">
      <i className="absolute left-[113px] top-[-3px] h-[2px] w-[4px] bg-[#555]" />
      <i className="absolute left-[1055px] top-[-4px] h-[3px] w-[40px] rounded-t-[3px] bg-[#333]" />
      <div className="flex flex-col leading-none">
        <svg className="ml-[137px] mt-[9px]" width="24" height="8" viewBox="0 0 24 8"><path d="M12 0 24 8H0Z" fill="#777" /></svg>
        <span className="ml-[62px] mt-[14px] text-[45px] tracking-[-1.800px] text-[#4a9c35]">18906.47</span>
        <span className="mt-[11px] flex items-center whitespace-nowrap pl-[14px] text-[38px] text-[#666]">电力行业<span className="ml-[15px] flex text-[39px] tracking-[-1px] text-[#4a9c35]"><span className="w-[18px]"><span className="inline-block origin-left scale-x-[0.75]">–</span></span>0.93%</span></span>
      </div>
      <Tool label="交易" className="pl-[2px]">
        <path d="M-17-25A30 30 0 0 1 29 10M31 9 37 10M29 12 27 13M18 25A30 30 0 0 1-25-14M-34-12-25-15-23-9" /><path d="M26 14 35 10" />
        <path d="M-10-14 0-3 10-14M0-3V16M-11-2H11M-11 7H11" strokeWidth="3.200" />
      </Tool>
      <Tool label="发帖">
        <path d="M11-28H-21Q-29-28-29-20V20Q-29 28-21 28H20Q28 28 28 20V-9" /><path d="M-9 9-4-1 17-18 20-14-1 5Z" fill="#666" /><path d="M23-23 27-27" strokeWidth="7" />
      </Tool>
      <Tool label="功能">
        <rect x="-27" y="-27" width="24" height="23" rx="3" /><rect x="-27" y="3" width="24" height="23" rx="3" /><rect x="3" y="3" width="24" height="23" rx="3" /><path d="M13.500-27Q15-28.500 16.500-27L27-17Q28.500-15.500 27-14L16.500-3Q15-1.500 13.500-3L3-14Q1.500-15.500 3-17Z" />
      </Tool>
      <Tool label="设自选" className="pl-[19px]">
        <circle r="29" /><g fill="#666" stroke="none"><circle cx="-13" r="3.400" /><circle r="3.400" /><circle cx="13" r="3.400" /></g>
      </Tool>
    </div>
  );
}

export default function App() {
  return (
    <div className="relative flex h-[2720px] w-[1260px] flex-col overflow-hidden bg-white font-[Roboto,'Noto_Sans_CJK_SC',sans-serif]">
      <StatusBar />
      <Header />
      <Quote />
      <PeriodTabs />
      <IndicatorRow />
      <Charts />
      <Banner />
      <InfoTabs />
      <Cards />
      <BottomBar />
      <div className="absolute right-[-60px] top-[300px] h-[322px] w-[86px] rounded-[48px] border-[1.500px] border-[#c4c4c4] bg-[#f0f0f0]/95 shadow-[0_0_34px_rgba(0,0,0,0.12)]" />
    </div>
  );
}
